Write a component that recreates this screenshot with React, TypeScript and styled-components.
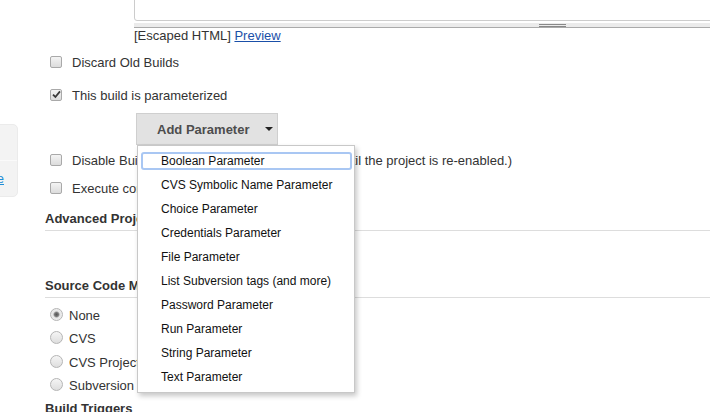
import { FC } from "react";
import styled, { createGlobalStyle } from "styled-components";

const GlobalStyle = createGlobalStyle`
  html, body {
    margin: 0;
    padding: 0;
    background: #fff;
    overflow: hidden;
  }
  body {
    font-family: "Liberation Sans", Arial, sans-serif;
    font-size: 13px;
    color: #333;
  }
`;

const Page = styled.div`
  display: grid;
  grid-template-columns: 16px minmax(0, 1fr);
  width: 710px;
  height: 412px;
  overflow: hidden;
`;

const Sidebar = styled.div`
  padding-top: 124px;
`;

const SidePanel = styled.div`
  width: 200px;
  margin-left: -184px;
  background: #f3f3f3;
  border: 1px solid #ebebeb;
  border-radius: 5px;
  overflow: hidden;
`;

const SideItem = styled.div<{ first?: boolean }>`
  height: 35px;
  display: flex;
  align-items: center;
  justify-content: flex-end;
  padding-right: 13px;
  border-top: ${(p) => (p.first ? "none" : "1px solid #fafafa")};
  a {
    color: #1e8dd6;
    text-decoration: underline;
  }
`;

const Main = styled.div`
  padding-left: 29px;
`;

const Editor = styled.div`
  margin-left: 89px;
  margin-top: -10px;
  width: 836px;
  height: 29px;
  border: 1px solid #ccc;
  border-radius: 0 0 0 3px;
`;

const Resizer = styled.div`
  margin: 2px 0 0 89px;
  width: 837px;
  height: 4px;
  background: #ebebeb;
  border-bottom: 1px solid #aaa;
  display: flex;
  justify-content: center;
  align-items: center;
`;

const Grip = styled.div`
  width: 27px;
  height: 1px;
  border-top: 1px solid #888;
  border-bottom: 1px solid #888;
`;

const Helper = styled.div`
  margin: 0 0 0 89px;
  height: 16px;
  line-height: 16px;
  a {
    color: #1a4fa8;
    text-decoration: underline;
  }
`;

const CheckRow = styled.label<{ top: number }>`
  display: flex;
  align-items: center;
  height: 24px;
  margin-top: ${(p) => p.top}px;
  padding-left: 5px;
  white-space: nowrap;
`;

const Box = styled.span`
  position: relative;
  width: 10px;
  height: 10px;
  border: 1px solid #a9a9a9;
  border-radius: 2px;
  background: linear-gradient(#f4f4f4, #dcdcdc);
  margin-right: 10px;
  flex: none;
  margin-top: -1px;
`;

const Tick = styled.svg`
  position: absolute;
  left: 1px;
  top: 0px;
`;

const RadioList = styled.div`
  margin-top: 6px;
`;

const RadioRow = styled.label`
  display: flex;
  align-items: center;
  height: 23.3px;
  padding-left: 5px;
`;

const Radio = styled.span<{ checked?: boolean }>`
  width: 11px;
  height: 11px;
  border: 1px solid #b5b5b5;
  border-radius: 50%;
  background: ${(p) =>
    p.checked
      ? "radial-gradient(circle, #555 0, #777 2px, #e6e6e6 3.5px, #f4f4f4 100%)"
      : "linear-gradient(#f5f5f5, #dedede)"};
  margin-right: 6px;
  flex: none;
  margin-top: -2px;
`;

const SectionHead = styled.div<{ top: number }>`
  margin-top: ${(p) => p.top}px;
  font-weight: bold;
  height: 16px;
  line-height: 16px;
  padding-bottom: 3px;
  border-bottom: 1px solid #ddd;
`;

const LastHead = styled.div`
  margin-top: 4px;
  font-weight: bold;
  line-height: 16px;
`;

const ButtonWrap = styled.div`
  position: relative;
  margin: 6px 0 0 91px;
  width: 142px;
`;

const DropButton = styled.button`
  display: flex;
  align-items: center;
  width: 142px;
  height: 32px;
  padding: 0 0 0 20px;
  background: #e2e2e2;
  border: 1px solid #cfcfcf;
  font-family: "Liberation Sans", Arial, sans-serif;
  font-size: 13px;
  font-weight: bold;
  color: #4d4d4d;
  white-space: nowrap;
  cursor: pointer;
`;

const Caret = styled.span`
  margin-left: 16px;
  width: 0;
  height: 0;
  border-left: 4px solid transparent;
  border-right: 4px solid transparent;
  border-top: 4px solid #222;
`;

const Menu = styled.ul`
  position: absolute;
  z-index: 5;
  left: 1px;
  top: 32px;
  width: 216px;
  margin: 0;
  padding: 3px 0 3px;
  list-style: none;
  background: #fff;
  border: 1px solid #c8c8c8;
  box-shadow: 2px 3px 5px rgba(0, 0, 0, 0.22);
  display: flex;
  flex-direction: column;
`;

const MenuItem = styled.li<{ focused?: boolean }>`
  height: 18px;
  line-height: 18px;
  margin: 3px 2px 3px 3px;
  padding-left: 20px;
  font-size: 12px;
  color: #111;
  white-space: nowrap;
  border-radius: 3px;
  box-shadow: ${(p) => (p.focused ? "inset 0 0 0 2px #a9c7f3" : "none")};
`;

const params = [
  "Boolean Parameter",
  "CVS Symbolic Name Parameter",
  "Choice Parameter",
  "Credentials Parameter",
  "File Parameter",
  "List Subversion tags (and more)",
  "Password Parameter",
  "Run Parameter",
  "String Parameter",
  "Text Parameter",
];

const Check: FC<{ checked?: boolean }> = ({ checked }) => (
  <Box>
    {checked && (
      <Tick width="9" height="9" viewBox="0 0 9 9">
        <path d="M1 4.6 L3.4 7 L8 1.4" fill="none" stroke="#3a3a3a" strokeWidth="1.8" />
      </Tick>
    )}
  </Box>
);

const App: FC = () => {
  return (
    <>
      <GlobalStyle />
      <Page>
        <Sidebar>
          <SidePanel>
            <SideItem first />
            <SideItem>
              <a>Manage</a>
            </SideItem>
          </SidePanel>
        </Sidebar>
        <Main>
          <Editor />
          <Resizer>
            <Grip />
          </Resizer>
          <Helper>
            [Escaped HTML] <a>Preview</a>
          </Helper>
          <CheckRow top={6}>
            <Check />
            Discard Old Builds
          </CheckRow>
          <CheckRow top={9}>
            <Check checked />
            This build is parameterized
          </CheckRow>
          <ButtonWrap>
            <DropButton>
              Add Parameter
              <Caret />
            </DropButton>
            <Menu>
              {params.map((p, i) => (
                <MenuItem key={p} focused={i === 0}>
                  {p}
                </MenuItem>
              ))}
            </Menu>
          </ButtonWrap>
          <CheckRow top={3}>
            <Check />
            Disable Build (No new builds will be executed until the project is re-enabled.)
          </CheckRow>
          <CheckRow top={4}>
            <Check />
            Execute concurrent builds if necessary
          </CheckRow>
          <SectionHead top={11}>Advanced Project Options</SectionHead>
          <SectionHead top={47}>Source Code Management</SectionHead>
          <RadioList>
            <RadioRow>
              <Radio checked />
              None
            </RadioRow>
            <RadioRow>
              <Radio />
              CVS
            </RadioRow>
            <RadioRow>
              <Radio />
              CVS Projectset
            </RadioRow>
            <RadioRow>
              <Radio />
              Subversion
            </RadioRow>
          </RadioList>
          <LastHead>Build Triggers</LastHead>
        </Main>
      </Page>
    </>
  );
};

export default App;
